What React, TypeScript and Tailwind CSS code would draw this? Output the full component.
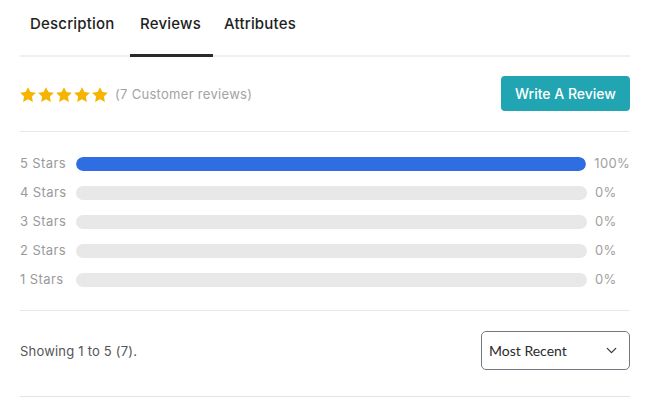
import { ChevronDown } from "lucide-react";

const font = { fontFamily: "Inter, 'Noto Sans', sans-serif" };

const rows = [
  { label: "5 Stars", pct: 100 },
  { label: "4 Stars", pct: 0 },
  { label: "3 Stars", pct: 0 },
  { label: "2 Stars", pct: 0 },
  { label: "1 Stars", pct: 0 },
];

const Star = () => (
  <svg viewBox="0 0 24 24" className="w-[18px] h-[18px]" fill="#f5b400">
    <path d="M12 1.5l3.2 6.6 7.3.9-5.3 5 1.3 7.3L12 17.8l-6.5 3.5 1.3-7.3-5.3-5 7.3-.9z" />
  </svg>
);

export default function App() {
  return (
    <div className="w-[659px] h-[400px] bg-white overflow-hidden" style={font}>
      <div className="ml-5 w-[610px]">
        {/* tabs */}
        <div className="flex border-b-2 border-[#efefef] h-[57px]">
          <div className="w-[110px] pl-[10px] pt-[13px] text-[15px] font-medium tracking-[0.2px] text-[#1e1e1e]">Description</div>
          <div className="w-[83px] pl-[10px] pt-[13px] text-[15px] font-medium tracking-[0.2px] text-[#1e1e1e] border-b-[3px] border-[#2a2a2a] -mb-[2px]">Reviews</div>
          <div className="pl-[11px] pt-[13px] text-[15px] font-medium tracking-[0.2px] text-[#1e1e1e]">Attributes</div>
        </div>

        {/* summary */}
        <div className="flex items-center justify-between h-[75px] border-b border-[#e8e8e8]">
          <div className="flex items-center gap-[6px] pt-[1px]">
            <div className="flex -ml-[1px]">
              {[0, 1, 2, 3, 4].map((i) => (
                <Star key={i} />
              ))}
            </div>
            <span className="text-[13px] tracking-[0.3px] text-[#a3a3a3]">(7 Customer reviews)</span>
          </div>
          <button className="bg-[#21a5b2] text-white text-[14px] font-medium rounded-[4px] w-[129px] h-[35px] -mt-[2px]">
            Write A Review
          </button>
        </div>

        {/* bars */}
        <div className="flex flex-col gap-[15px] pt-[25px] pb-[23px] border-b border-[#e8e8e8]">
          {rows.map((r) => (
            <div key={r.label} className="flex items-center h-[14px]">
              <span className="w-[56px] text-[13px] tracking-[0.4px] text-[#9a9a9a]">{r.label}</span>
              <div className="w-[511px] h-[14px] rounded-full bg-[#e8e8e8] overflow-hidden">
                <div className="h-full rounded-full bg-[#2f6de3]" style={{ width: `${r.pct}%` }} />
              </div>
              <span className="ml-[8px] text-[13px] tracking-[0.3px] text-[#a0a0a0]">{r.pct}%</span>
            </div>
          ))}
        </div>

        {/* footer */}
        <div className="flex items-center justify-between h-[86px] border-b border-[#e3e3e3]">
          <span className="text-[13px] tracking-[0.2px] text-[#555555] -mt-[3px]">Showing 1 to 5 (7).</span>
          <div
            className="flex items-center justify-between w-[149px] h-[39px] border-[1.5px] border-[#737880] rounded-[5px] pl-[7px] pr-[9px] mb-[6px] text-[14px] text-[#2a2a2a]"
            style={{ fontFamily: "Lato, sans-serif" }}
          >
            <span>Most Recent</span>
            <ChevronDown size={17} strokeWidth={1.75} color="#333" />
          </div>
        </div>
      </div>
    </div>
  );
}
